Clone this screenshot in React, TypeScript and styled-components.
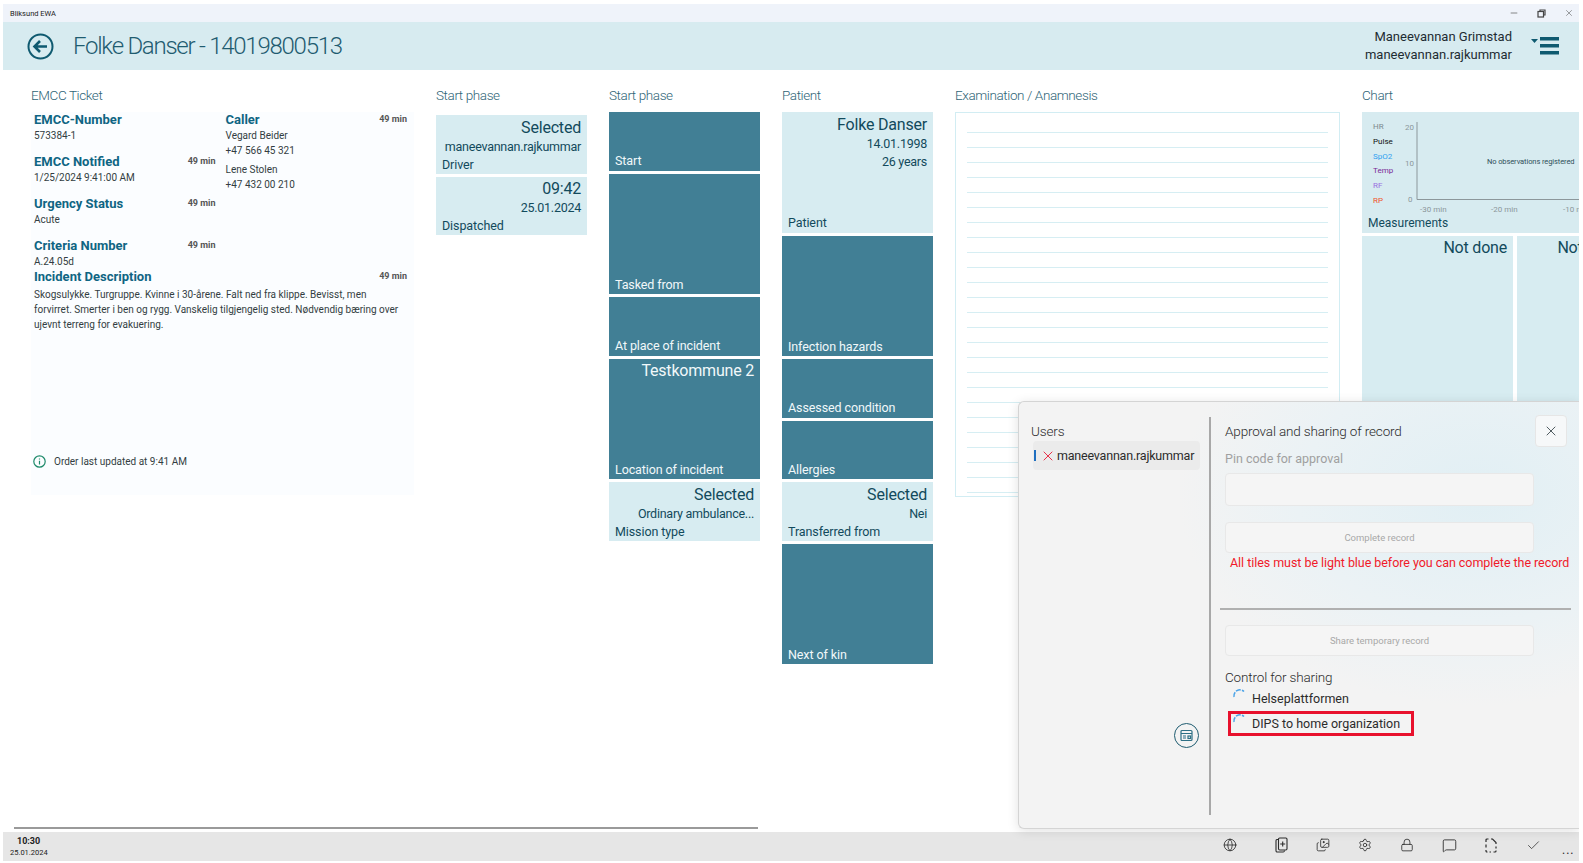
import React from "react";
import styled, { createGlobalStyle } from "styled-components";
import { Check, Globe, Images, Lock, MessageSquare, Minus, Settings, X } from "lucide-react";

const GlobalStyle = createGlobalStyle`
  html, body { margin: 0; padding: 0; background: #fff; }
  * { box-sizing: border-box; }
`;

const Page = styled.div`
  width: 1583px;
  height: 863px;
  padding: 4px 4px 2px 3px;
  font-family: Roboto, "Open Sans", sans-serif;
  color: #26333a;
  overflow: hidden;
`;

const Window = styled.div`
  position: relative;
  height: 100%;
  display: flex;
  flex-direction: column;
  overflow: hidden;
`;

const TitleBar = styled.div`
  height: 18px;
  flex: none;
  display: flex;
  align-items: center;
  justify-content: space-between;
  padding: 0 5px 0 7px;
  background: #eff3fa;
  font-size: 7.5px;
  color: #222;
`;

const WindowButtons = styled.div`
  display: flex;
  align-items: center;
  gap: 18px;
  color: #444;
`;

const Header = styled.header`
  height: 48px;
  flex: none;
  display: flex;
  align-items: center;
  padding: 0 19px 0 24px;
  background: #d7ebf0;
`;

const PatientTitle = styled.h1`
  margin: 0 0 0 19px;
  flex: 1;
  font-size: 24px;
  font-weight: 300;
  letter-spacing: -1.25px;
  color: #1f5c70;
`;

const UserBlock = styled.div`
  text-align: right;
  font-size: 13px;
  line-height: 18px;
  color: #1e2c32;
  margin-right: 19px;
`;

const Main = styled.main`
  flex: 1;
  min-height: 0;
  display: flex;
  flex-direction: column;
`;

const Columns = styled.div`
  flex: 1;
  min-height: 0;
  display: flex;
  gap: 22px;
  padding: 14px 0 0 28px;
  overflow: hidden;
`;

const Column = styled.section<{ $width: number }>`
  flex: none;
  width: ${(p) => p.$width}px;
`;

const ColumnTitle = styled.h2`
  margin: 0;
  height: 28px;
  font-size: 13.5px;
  font-weight: 300;
  letter-spacing: -0.4px;
  line-height: 22px;
  color: #2f6577;
`;

const TileStack = styled.div<{ $offset?: number }>`
  display: flex;
  flex-direction: column;
  gap: 3px;
  margin-top: ${(p) => p.$offset ?? 0}px;
`;

const TileBox = styled.div<{ $dark?: boolean; $tall?: boolean }>`
  height: ${(p) => (p.$tall ? 120.5 : 58.5)}px;
  display: flex;
  flex-direction: column;
  padding: 2.5px 6px 0.5px;
  background: ${(p) => (p.$dark ? "#417f95" : "#d7ecf1")};
  color: ${(p) => (p.$dark ? "#f1f8fa" : "#124a5c")};
`;

const TileValue = styled.div`
  font-size: 16px;
  letter-spacing: -0.2px;
  line-height: 20px;
  text-align: right;
  white-space: nowrap;
`;

const TileSub = styled.div`
  font-size: 12.5px;
  letter-spacing: -0.25px;
  line-height: 18px;
  text-align: right;
  white-space: nowrap;
`;

const TileLabel = styled.div`
  margin-top: auto;
  font-size: 12.5px;
  letter-spacing: -0.1px;
  line-height: 18px;
`;

const TicketCard = styled.div`
  height: 383px;
  display: flex;
  flex-direction: column;
  padding: 0 7px 26px 3px;
  background: #fbfdff;
`;

const TicketGrid = styled.div`
  display: grid;
  grid-template-columns: 1fr 1fr;
  column-gap: 10px;
`;

const TicketField = styled.div<{ $height?: number }>`
  position: relative;
  min-height: ${(p) => p.$height ?? 42}px;
`;

const FieldLabel = styled.div`
  font-size: 13px;
  font-weight: 700;
  line-height: 15.5px;
  color: #0f6583;
`;

const FieldValue = styled.div<{ $gap?: boolean }>`
  font-size: 10px;
  line-height: 15px;
  color: #333d42;
  margin-top: ${(p) => (p.$gap ? 4.5 : 0)}px;
`;

const Age = styled.span`
  position: absolute;
  top: 1px;
  right: 0;
  font-size: 9px;
  line-height: 12px;
  font-weight: 700;
  color: #555;
`;

const Description = styled.p`
  margin: 3px 0 0;
  font-size: 10px;
  line-height: 15px;
  color: #333d42;
`;

const UpdatedNote = styled.div`
  margin: auto 0 0 -1px;
  display: flex;
  align-items: center;
  gap: 8px;
  font-size: 10px;
  line-height: 15px;
  color: #333d42;
`;

const ExamBox = styled.div`
  height: 385px;
  display: flex;
  flex-direction: column;
  gap: 14px;
  padding: 19px 11px 0;
  border: 1px solid #d2edf3;
  overflow: hidden;
`;

const ExamLine = styled.div`
  height: 1px;
  flex: none;
  background: #d6eef3;
`;

const ChartTile = styled.div`
  height: 120.5px;
  padding: 8px 0 0 11px;
  background: #d7ebf0;
  overflow: hidden;
`;

const ChartBody = styled.div`
  display: flex;
  height: 98px;
`;

const Legend = styled.ul`
  list-style: none;
  margin: 0;
  padding: 0;
  width: 27px;
  flex: none;
`;

const LegendItem = styled.li<{ $color: string }>`
  font-size: 8px;
  line-height: 14.8px;
  color: ${(p) => p.$color};
`;

const Plot = styled.div`
  position: relative;
  flex: none;
  width: 205px;
  height: 92px;
`;

const PlotNote = styled.span`
  position: absolute;
  left: 87px;
  top: 37px;
  font-size: 7.5px;
  letter-spacing: -0.1px;
  white-space: nowrap;
  color: #2f4f5a;
`;

const Measurements = styled.div`
  margin: -3px 0 0 -5px;
  font-size: 12px;
  line-height: 16px;
  color: #124a5c;
`;

const TileRow = styled.div`
  display: flex;
  gap: 4px;
  margin-top: 3px;
`;

const MeasureTile = styled(TileBox)<{ $width: number }>`
  width: ${(p) => p.$width}px;
  flex: none;
  height: 200px;
`;

const ScrollThumb = styled.div`
  flex: none;
  height: 2px;
  width: 744px;
  margin: 0 0 3px 11px;
  background: #9a9a9a;
`;

const Footer = styled.footer`
  height: 29px;
  flex: none;
  display: flex;
  align-items: center;
  padding: 0 0 3px 7px;
  background: #e6e6e6;
  color: #222;
`;

const Clock = styled.div`
  flex: 1;
  margin-top: 3px;
  font-size: 7.5px;
  line-height: 11px;
`;

const ClockTime = styled.div`
  margin-left: 7px;
  font-size: 9px;
  font-weight: 700;
`;

const FooterButton = styled.div<{ $wide?: boolean }>`
  width: ${(p) => (p.$wide ? 60 : 42)}px;
  display: flex;
  justify-content: center;
  color: #2b2b2b;
`;

const More = styled.div`
  width: 25px;
  padding-left: 8px;
  font-size: 12px;
  line-height: 12px;
  letter-spacing: 1px;
  margin-top: 10px;
`;

const Dialog = styled.aside`
  position: absolute;
  top: 397px;
  right: 0;
  left: 1015px;
  height: 428px;
  display: flex;
  padding: 15px 0 13px;
  border: 1px solid #d4d4d4;
  border-right: none;
  border-radius: 6px 0 0 6px;
  background: radial-gradient(ellipse 300px 210px at 82% 22%, #e1eff4 0%, #ebf2f5 60%, #f3f3f3 100%), #f3f3f3;
  box-shadow: 0 2px 12px rgba(0, 0, 0, 0.12);
`;

const UsersPane = styled.div`
  width: 192px;
  flex: none;
  display: flex;
  flex-direction: column;
  padding: 4px 9px 0 12px;
  border-right: 2px solid #a8a8a8;
`;

const PaneTitle = styled.div`
  font-size: 13.5px;
  font-weight: 300;
  letter-spacing: -0.15px;
  line-height: 20px;
  color: #2b2b2b;
`;

const UserRow = styled.div`
  height: 29px;
  display: flex;
  align-items: center;
  gap: 1px;
  margin-left: 2px;
  padding-left: 1px;
  border-radius: 4px;
  background: #ebebeb;
  font-size: 12.5px;
  letter-spacing: -0.2px;
  color: #2b2b2b;
  white-space: nowrap;
`;

const UserMarker = styled.span`
  flex: none;
  width: 2px;
  height: 11px;
  margin-right: 3px;
  background: #1f6fc0;
`;

const RoundAction = styled.div`
  width: 25px;
  height: 25px;
  display: flex;
  align-items: center;
  justify-content: center;
  align-self: flex-end;
  margin: auto 1px 67px 0;
  border: 1.5px solid #1f5c70;
  border-radius: 50%;
  color: #2d6f85;
`;

const RecordPane = styled.div`
  position: relative;
  flex: 1;
  min-width: 0;
  display: flex;
  flex-direction: column;
  padding: 4px 8px 0 14px;
`;

const CloseButton = styled.div`
  position: absolute;
  top: -2px;
  right: 12px;
  width: 32px;
  height: 32px;
  display: flex;
  align-items: center;
  justify-content: center;
  border: 1px solid #e6e6e6;
  border-radius: 4px;
  background: #f6f8f9;
`;

const FieldCaption = styled.div`
  margin-top: 8px;
  font-size: 12.5px;
  line-height: 20px;
  color: #a0a0a0;
`;

const InputBox = styled.div`
  width: 309px;
  height: 33px;
  margin-top: 4px;
  border: 1px solid #e8e8e8;
  border-radius: 4px;
  background: #f5f5f5;
`;

const DisabledButton = styled.div<{ $top: number }>`
  width: 309px;
  height: 31px;
  margin-top: ${(p) => p.$top}px;
  display: flex;
  align-items: center;
  justify-content: center;
  border: 1px solid #e8e8e8;
  border-radius: 4px;
  background: #f5f5f5;
  font-size: 9.5px;
  color: #a8a8a8;
`;

const ErrorText = styled.div`
  margin: 1px 0 0 5px;
  font-size: 12.5px;
  letter-spacing: -0.05px;
  line-height: 18px;
  color: #f01a2a;
  white-space: nowrap;
`;

const Separator = styled.hr`
  width: 351px;
  height: 2px;
  margin: 36px 0 0 -5px;
  border: none;
  background: #b0b0b0;
`;

const SharingTitle = styled(PaneTitle)`
  margin: 11px 0 -1px;
`;

const SharingRow = styled.div<{ $flagged?: boolean }>`
  width: 186px;
  height: 25px;
  display: flex;
  align-items: center;
  gap: 6px;
  margin-left: 3px;
  padding-left: 1px;
  border: 3px solid ${(p) => (p.$flagged ? "#e8112d" : "transparent")};
  font-size: 12.5px;
  color: #2b2b2b;
  white-space: nowrap;
`;

const ticketLeft = [
  { label: "EMCC-Number", value: "573384-1" },
  { label: "EMCC Notified", value: "1/25/2024 9:41:00 AM", age: true },
  { label: "Urgency Status", value: "Acute", age: true },
  { label: "Criteria Number", value: "A.24.05d", age: true, height: 30 },
];

type TileData = { label: string; value?: string; subs?: string[]; dark?: boolean; tall?: boolean };

const assigned: TileData[] = [
  { label: "Driver", value: "Selected", subs: ["maneevannan.rajkummar"] },
  { label: "Dispatched", value: "09:42", subs: ["25.01.2024"] },
];

const startPhase: TileData[] = [
  { label: "Start", dark: true },
  { label: "Tasked from", dark: true, tall: true },
  { label: "At place of incident", dark: true },
  { label: "Location of incident", value: "Testkommune 2", dark: true, tall: true },
  { label: "Mission type", value: "Selected", subs: ["Ordinary ambulance..."] },
];

const patient: TileData[] = [
  { label: "Patient", value: "Folke Danser", subs: ["14.01.1998", "26 years"], tall: true },
  { label: "Infection hazards", dark: true, tall: true },
  { label: "Assessed condition", dark: true },
  { label: "Allergies", dark: true },
  { label: "Transferred from", value: "Selected", subs: ["Nei"] },
  { label: "Next of kin", dark: true, tall: true },
];

const legend = [
  { name: "HR", color: "#7d8a8f" },
  { name: "Pulse", color: "#111" },
  { name: "SpO2", color: "#2f9ff0" },
  { name: "Temp", color: "#7a2a96" },
  { name: "RF", color: "#9a6ee0" },
  { name: "RP", color: "#f0552a" },
];

function Tile({ tile }: { tile: TileData }) {
  return (
    <TileBox $dark={tile.dark} $tall={tile.tall}>
      {tile.value && <TileValue>{tile.value}</TileValue>}
      {tile.subs?.map((s) => <TileSub key={s}>{s}</TileSub>)}
      <TileLabel>{tile.label}</TileLabel>
    </TileBox>
  );
}

function Spinner() {
  return (
    <svg width="14" height="14" viewBox="0 0 14 14" fill="none" style={{ marginTop: -8, flex: "none" }}>
      <path d="M2 9 A6 6 0 0 1 12 3.5" stroke="#4aa3e8" strokeWidth="1.5" strokeDasharray="5 1.2" />
    </svg>
  );
}

function RecordCopyIcon() {
  return (
    <svg width="13" height="16" viewBox="0 0 13 16" fill="none" stroke="currentColor" strokeWidth="1.1">
      <path d="M3.5 2.5H2A1.2 1.2 0 0 0 1 3.7v10.1A1.2 1.2 0 0 0 2.2 15h6a1.2 1.2 0 0 0 1.2-1v-.5" />
      <rect x="3.5" y="1" width="8.5" height="12" rx="1.2" />
      <path d="M7.7 4.5v5M5.2 7h5" />
    </svg>
  );
}

function FileDashedIcon() {
  return (
    <svg width="12" height="15" viewBox="0 0 12 15" fill="none" stroke="currentColor" strokeWidth="1.2">
      <path d="M1 4V2a1 1 0 0 1 1-1h1.5M6 1h1.5L11 4.5V6M11 8.5v2M11 12.5V13a1 1 0 0 1-1 1H8.5M6 14H4.5M2.5 14H2a1 1 0 0 1-1-1v-1M1 9.5V6.5" />
    </svg>
  );
}

export default function App() {
  return (
    <>
      <GlobalStyle />
      <Page>
        <Window>
          <TitleBar>
            <span>Bliksund EWA</span>
            <WindowButtons>
              <Minus size={10} strokeWidth={1.5} />
              <svg width="9" height="9" viewBox="0 0 9 9" fill="none" stroke="currentColor" strokeWidth="1.2">
                <rect x="1" y="2.5" width="5.5" height="5.5" />
                <path d="M3 2.5V1h5v5H6.5" />
              </svg>
              <X size={10} strokeWidth={1.2} />
            </WindowButtons>
          </TitleBar>
          <Header>
            <svg width="27" height="27" viewBox="0 0 27 27" fill="none" stroke="#0f5a70">
              <circle cx="13.5" cy="13.5" r="12" strokeWidth="2" />
              <path d="M20 13.5H8M13 8l-5.5 5.5L13 19" strokeWidth="2.6" />
            </svg>
            <PatientTitle>Folke Danser - 14019800513</PatientTitle>
            <UserBlock>
              Maneevannan Grimstad
              <br />
              maneevannan.rajkummar
            </UserBlock>
            <svg width="29" height="18" viewBox="0 0 29 18" fill="#0f5a70">
              <path d="M0 2h7L3.5 6z" />
              <rect x="9" y="0" width="19" height="3.5" />
              <rect x="9" y="7" width="19" height="3.5" />
              <rect x="9" y="14" width="19" height="3.5" />
            </svg>
          </Header>
          <Main>
            <Columns>
              <Column $width={383}>
                <ColumnTitle>EMCC Ticket</ColumnTitle>
                <TicketCard>
                  <TicketGrid>
                    <div>
                      {ticketLeft.map((f) => (
                        <TicketField key={f.label} $height={f.height}>
                          <FieldLabel>{f.label}</FieldLabel>
                          <FieldValue>{f.value}</FieldValue>
                          {f.age && <Age>49 min</Age>}
                        </TicketField>
                      ))}
                    </div>
                    <TicketField>
                      <FieldLabel>Caller</FieldLabel>
                      <FieldValue>Vegard Beider</FieldValue>
                      <FieldValue>+47 566 45 321</FieldValue>
                      <FieldValue $gap>Lene Stolen</FieldValue>
                      <FieldValue>+47 432 00 210</FieldValue>
                      <Age>49 min</Age>
                    </TicketField>
                  </TicketGrid>
                  <TicketField>
                    <FieldLabel>Incident Description</FieldLabel>
                    <Age>49 min</Age>
                    <Description>
                      Skogsulykke. Turgruppe. Kvinne i 30-årene. Falt ned fra klippe. Bevisst, men
                      <br />
                      forvirret. Smerter i ben og rygg. Vanskelig tilgjengelig sted. Nødvendig bæring over
                      <br />
                      ujevnt terreng for evakuering.
                    </Description>
                  </TicketField>
                  <UpdatedNote>
                    <svg width="13" height="13" viewBox="0 0 13 13" fill="none" stroke="#1e8a6a" strokeWidth="1.2">
                      <circle cx="6.5" cy="6.5" r="5.7" />
                      <path d="M6.5 5.8v3.6M6.5 3.4v1.2" />
                    </svg>
                    Order last updated at 9:41 AM
                  </UpdatedNote>
                </TicketCard>
              </Column>
              <Column $width={151}>
                <ColumnTitle>Start phase</ColumnTitle>
                <TileStack $offset={3}>
                  {assigned.map((t) => <Tile key={t.label} tile={t} />)}
                </TileStack>
              </Column>
              <Column $width={151}>
                <ColumnTitle>Start phase</ColumnTitle>
                <TileStack>
                  {startPhase.map((t) => <Tile key={t.label} tile={t} />)}
                </TileStack>
              </Column>
              <Column $width={151}>
                <ColumnTitle>Patient</ColumnTitle>
                <TileStack>
                  {patient.map((t) => <Tile key={t.label} tile={t} />)}
                </TileStack>
              </Column>
              <Column $width={385}>
                <ColumnTitle>Examination / Anamnesis</ColumnTitle>
                <ExamBox>
                  {Array.from({ length: 26 }, (_, i) => <ExamLine key={i} />)}
                </ExamBox>
              </Column>
              <Column $width={268}>
                <ColumnTitle>Chart</ColumnTitle>
                <ChartTile>
                  <ChartBody>
                    <Legend>
                      {legend.map((l) => (
                        <LegendItem key={l.name} $color={l.color}>{l.name}</LegendItem>
                      ))}
                    </Legend>
                    <Plot>
                      <svg width="205" height="93" viewBox="0 0 205 93" fontSize="8" fill="#8c979b" fontFamily="Roboto">
                        <path d="M17 2V79.5H205" fill="none" stroke="#8c979b" />
                        <text x="5" y="10">20</text>
                        <text x="5" y="46">10</text>
                        <text x="8" y="82">0</text>
                        <text x="20" y="92">-30 min</text>
                        <text x="91" y="92">-20 min</text>
                        <text x="163" y="92">-10 min</text>
                      </svg>
                      <PlotNote>No observations registered</PlotNote>
                    </Plot>
                  </ChartBody>
                  <Measurements>Measurements</Measurements>
                </ChartTile>
                <TileRow>
                  <MeasureTile $width={151}>
                    <TileValue>Not done</TileValue>
                  </MeasureTile>
                  <MeasureTile $width={110}>
                    <TileValue>Not done</TileValue>
                  </MeasureTile>
                </TileRow>
              </Column>
            </Columns>
            <ScrollThumb />
          </Main>
          <Footer>
            <Clock>
              <ClockTime>10:30</ClockTime>
              25.01.2024
            </Clock>
            <FooterButton $wide><Globe size={14} strokeWidth={1.4} /></FooterButton>
            <FooterButton><RecordCopyIcon /></FooterButton>
            <FooterButton><Images size={14} strokeWidth={1.4} /></FooterButton>
            <FooterButton><Settings size={14} strokeWidth={1.4} /></FooterButton>
            <FooterButton><Lock size={14} strokeWidth={1.4} /></FooterButton>
            <FooterButton><MessageSquare size={15} strokeWidth={1.4} /></FooterButton>
            <FooterButton><FileDashedIcon /></FooterButton>
            <FooterButton><Check size={15} strokeWidth={1.2} /></FooterButton>
            <More>...</More>
          </Footer>
          <Dialog>
            <UsersPane>
              <PaneTitle>Users</PaneTitle>
              <UserRow>
                <UserMarker />
                <X size={16} color="#e8112d" strokeWidth={1.3} style={{ flex: "none" }} />
                maneevannan.rajkummar
              </UserRow>
              <RoundAction>
                <svg width="13" height="13" viewBox="0 0 13 13" fill="none" stroke="currentColor" strokeWidth="1.2">
                  <rect x="1" y="1.5" width="11" height="10" rx="1" />
                  <path d="M1 4.5h11M3 7h3M3 9h3" />
                  <rect x="8" y="7" width="2.5" height="2.5" />
                </svg>
              </RoundAction>
            </UsersPane>
            <RecordPane>
              <PaneTitle>Approval and sharing of record</PaneTitle>
              <CloseButton><X size={16} strokeWidth={1.2} /></CloseButton>
              <FieldCaption>Pin code for approval</FieldCaption>
              <InputBox />
              <DisabledButton $top={16}>Complete record</DisabledButton>
              <ErrorText>All tiles must be light blue before you can complete the record</ErrorText>
              <Separator />
              <DisabledButton $top={15}>Share temporary record</DisabledButton>
              <SharingTitle>Control for sharing</SharingTitle>
              <SharingRow><Spinner />Helseplattformen</SharingRow>
              <SharingRow $flagged><Spinner />DIPS to home organization</SharingRow>
            </RecordPane>
          </Dialog>
        </Window>
      </Page>
    </>
  );
}
